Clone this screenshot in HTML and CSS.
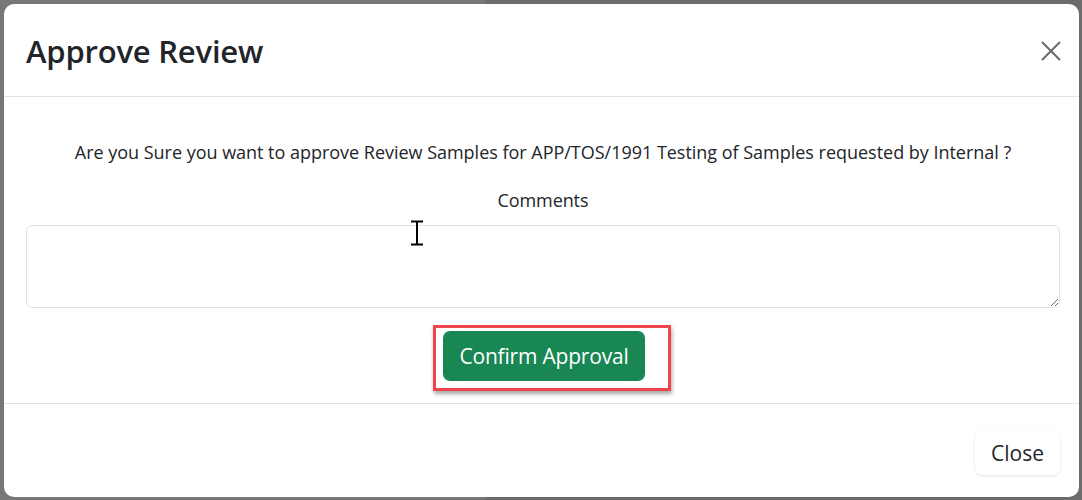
FILE: index.html
```html
<!DOCTYPE html>
<html>
<head>
<meta charset="utf-8">
<link rel="stylesheet" href="styles.css">
</head>
<body>
<div class="backdrop">
  <div class="modal">
    <div class="modal-header">
      <h2 class="modal-title">Approve Review</h2>
      <button class="btn-close" aria-label="Close">
        <svg width="20" height="20" viewBox="0 0 20 20"><path d="M1 1L19 19M19 1L1 19" stroke="#6b6b6b" stroke-width="2" fill="none"/></svg>
      </button>
    </div>
    <div class="modal-body">
      <p class="question">Are you Sure you want to approve Review Samples for APP/TOS/1991 Testing of Samples requested by Internal ?</p>
      <label class="label">Comments</label>
      <textarea class="comments"></textarea>
      <div class="actions">
        <div class="highlight-wrap">
          <button class="btn-confirm">Confirm Approval</button>
          <span class="highlight"></span>
        </div>
      </div>
    </div>
    <div class="modal-footer">
      <button class="btn-close-text">Close</button>
    </div>
  </div>
</div>
<svg class="cursor" width="16" height="26" viewBox="0 0 16 26"><path d="M2 1.5H14M8 1.5V24.5M2 24.5H14" stroke="#000" stroke-width="2" fill="none"/></svg>
</body>
</html>
```
FILE: styles.css
```css
html, body {
  margin: 0;
  padding: 0;
  height: 100%;
}
body {
  background: #6f6f6f;
  font-family: "Segoe UI", "Open Sans", "Noto Sans", sans-serif;
  color: #212529;
  overflow: hidden;
  position: relative;
}
.backdrop {
  padding: 4px 3px 3px 4px;
  height: 500px;
  box-sizing: border-box;
  background: linear-gradient(to right, #777 0, #777 485px, #6c6c6c 485px);
}
.modal {
  background: #fff;
  border-radius: 10px;
  height: 493px;
  display: flex;
  flex-direction: column;
  overflow: hidden;
}
.modal-header {
  height: 93px;
  flex: none;
  box-sizing: border-box;
  border-bottom: 1px solid #dee2e6;
  display: flex;
  align-items: center;
  justify-content: space-between;
  padding: 2px 18px 0 22px;
}
.modal-title {
  margin: 0;
  font-size: 31px;
  font-weight: 600;
  letter-spacing: -0.2px;
  color: #212529;
}
.btn-close {
  border: 0;
  background: none;
  padding: 0;
  width: 20px;
  height: 20px;
  cursor: pointer;
}
.modal-body {
  flex: none;
  display: flex;
  flex-direction: column;
  align-items: center;
  padding: 42px 19px 0 22px;
  height: 307px;
  box-sizing: border-box;
  border-bottom: 1px solid #dee2e6;
}
.question {
  margin: 0;
  font-size: 18px;
  line-height: 27px;
  letter-spacing: -0.02px;
  text-align: center;
}
.label {
  margin-top: 21px;
  font-size: 18px;
  line-height: 27px;
  letter-spacing: -0.1px;
}
.comments {
  margin-top: 11px;
  width: 100%;
  height: 83px;
  flex: none;
  box-sizing: border-box;
  border: 1px solid #dee2e6;
  border-radius: 6px;
  resize: vertical;
  font-family: inherit;
  font-size: 16px;
}
.actions {
  margin-top: 23px;
  display: flex;
  justify-content: center;
}
.highlight-wrap {
  position: relative;
  margin-left: 2px;
}
.btn-confirm {
  display: block;
  background: #198754;
  color: #fff;
  border: 0;
  border-radius: 7px;
  font-family: inherit;
  font-size: 21px;
  letter-spacing: -0.2px;
  height: 50px;
  width: 202px;
  padding: 0;
}
.highlight {
  position: absolute;
  left: -10px;
  top: -6px;
  width: 232px;
  height: 60px;
  border: 3px solid #f0434a;
  box-shadow: 1px 3px 4px rgba(0,0,0,0.35);
  pointer-events: none;
}
.modal-footer {
  flex: 1;
  display: flex;
  justify-content: flex-end;
  align-items: center;
  padding: 0 19px 0 0;
}
.btn-close-text {
  background: #fff;
  border: 0;
  border-radius: 7px;
  box-shadow: 0 1px 3px rgba(0,0,0,0.12);
  font-family: inherit;
  font-size: 21px;
  color: #212529;
  height: 45px;
  width: 85px;
  padding: 0;
  margin-top: 4px;
}
.cursor {
  position: absolute;
  left: 409px;
  top: 220px;
}
```
